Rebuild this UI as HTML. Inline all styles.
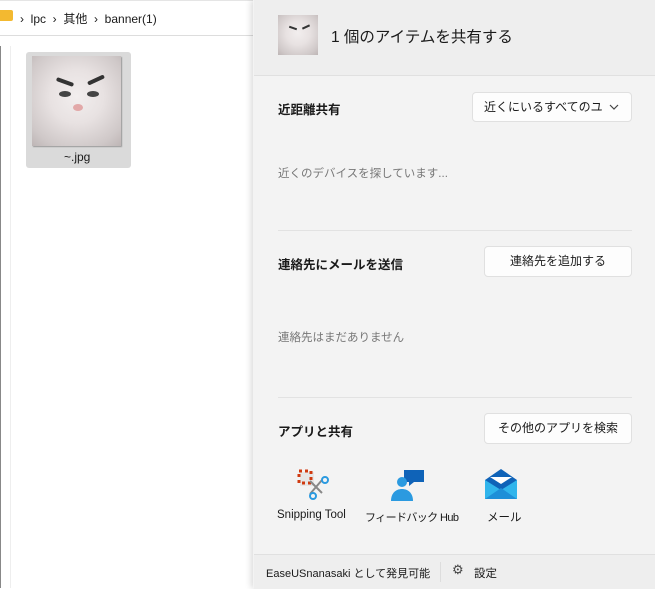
<!DOCTYPE html><html><head><meta charset="utf-8"><style>
body{margin:0;width:655px;height:588px;overflow:hidden;background:#fff;font-family:"Liberation Sans","Noto Sans CJK JP",sans-serif;position:relative}
.a{position:absolute}
.btn{position:absolute;background:#fdfdfd;border:1px solid #e0e0e0;border-radius:4px;font-size:12px;color:#1a1a1a;box-sizing:border-box;text-align:center}
.h{position:absolute;font-size:12.5px;font-weight:bold;color:#1a1a1a}
.g{position:absolute;font-size:11.5px;color:#777}
.cat{position:absolute;background:radial-gradient(circle at 50% 45%,#f2eeee 0,#e8e2e2 40%,#cfc8c8 80%,#bdb5b5 100%);overflow:hidden}
</style></head><body>
<div class="a" style="left:0;top:0;width:254px;height:34px;border-bottom:1px solid #ddd;border-top:1px solid #e5e5e5"></div>
<div class="a" style="left:0;top:10px;width:13px;height:11px;background:#f3b930;border-radius:0 2px 2px 0"></div>
<div class="a" style="left:20px;top:10px;font-size:12px;color:#1a1a1a;white-space:pre">›  lpc  ›  其他  ›  banner(1)</div>
<div class="a" style="left:0;top:46px;width:1px;height:542px;background:#888"></div>
<div class="a" style="left:10px;top:46px;width:1px;height:542px;background:#eee"></div>
<div class="a" style="left:26px;top:52px;width:105px;height:116px;background:#dadada;border-radius:3px"></div>
<div class="cat" style="left:32px;top:56px;width:89px;height:90px;box-shadow:1px 1px 1px #999">
<div class="a" style="left:24px;top:24px;width:18px;height:4px;background:#333;transform:rotate(20deg);border-radius:2px"></div>
<div class="a" style="left:55px;top:22px;width:18px;height:4px;background:#333;transform:rotate(-25deg);border-radius:2px"></div>
<div class="a" style="left:27px;top:35px;width:12px;height:6px;background:#444;border-radius:50%"></div>
<div class="a" style="left:55px;top:35px;width:12px;height:6px;background:#444;border-radius:50%"></div>
<div class="a" style="left:41px;top:48px;width:10px;height:7px;background:#e2a8a8;border-radius:50%"></div>
</div>
<div class="a" style="left:64px;top:150px;font-size:12px;color:#1a1a1a">~.jpg</div>

<div class="a" style="left:253px;top:0;width:402px;height:588px;background:#f3f3f3;box-shadow:-2px 0 6px rgba(0,0,0,.15)"></div>
<div class="a" style="left:254px;top:0;width:401px;height:75px;background:#eeeeee;border-bottom:1px solid #e0e0e0"></div>
<div class="cat" style="left:278px;top:15px;width:40px;height:40px">
<div class="a" style="left:11px;top:12px;width:8px;height:2px;background:#333;transform:rotate(20deg)"></div>
<div class="a" style="left:24px;top:11px;width:8px;height:2px;background:#333;transform:rotate(-25deg)"></div>
</div>
<div class="a" style="left:331px;top:25px;font-size:15.5px;color:#1a1a1a">1 個のアイテムを共有する</div>

<div class="h" style="left:278px;top:99px">近距離共有</div>
<div class="btn" style="left:472px;top:92px;width:160px;height:30px;line-height:28px;text-align:left;padding-left:11px">近くにいるすべてのユ<svg style="position:absolute;right:12px;top:11px" width="10" height="6" viewBox="0 0 10 6"><path d="M1 1l4 4 4-4" stroke="#444" fill="none" stroke-width="1.2"/></svg></div>
<div class="g" style="left:278px;top:165px">近くのデバイスを探しています...</div>
<div class="a" style="left:278px;top:230px;width:354px;height:1px;background:#e2e2e2"></div>
<div class="h" style="left:278px;top:254px">連絡先にメールを送信</div>
<div class="btn" style="left:484px;top:246px;width:148px;height:31px;line-height:29px">連絡先を追加する</div>
<div class="g" style="left:278px;top:329px">連絡先はまだありません</div>
<div class="a" style="left:278px;top:397px;width:354px;height:1px;background:#e2e2e2"></div>
<div class="h" style="left:278px;top:421px">アプリと共有</div>
<div class="btn" style="left:484px;top:413px;width:148px;height:31px;line-height:29px">その他のアプリを検索</div>

<svg class="a" style="left:296px;top:468px" width="36" height="34" viewBox="0 0 36 34">
<rect x="4" y="4" width="14" height="14" fill="#e6e6e6"/>
<path d="M3 3h12v12H3z" stroke="#d03a10" stroke-width="3" fill="none" stroke-dasharray="3 3"/>
<path d="M14 13l12 12M26 12l-12 14" stroke="#888" stroke-width="2"/>
<circle cx="29" cy="12" r="3" fill="none" stroke="#2b9ae0" stroke-width="2"/>
<circle cx="17" cy="28" r="3" fill="none" stroke="#2b9ae0" stroke-width="2"/>
</svg>
<svg class="a" style="left:390px;top:468px" width="36" height="34" viewBox="0 0 36 34">
<path d="M14 2h20v12h-10l-5 4v-4h-5z" fill="#0f63b8"/>
<circle cx="12" cy="14" r="5" fill="#2b9ae0"/>
<path d="M1 33c0-8 5-12 11-12s11 4 11 12z" fill="#2b9ae0"/>
</svg>
<svg class="a" style="left:484px;top:468px" width="34" height="32" viewBox="0 0 34 32">
<path d="M1 12L17 1l16 11v19H1z" fill="#0f63b8"/>
<path d="M1 12l16 10 16-10v19H1z" fill="#30b5ec"/>
<path d="M1 31l16-11 16 11z" fill="#1e8fd8"/>
<path d="M6 9h22l-11 7z" fill="#fff"/>
</svg>
<div class="a" style="left:277px;top:509px;font-size:11.5px;color:#1a1a1a">Snipping Tool</div>
<div class="a" style="left:365px;top:509px;font-size:11px;color:#1a1a1a;letter-spacing:-0.6px">フィードバック Hub</div>
<div class="a" style="left:487px;top:509px;font-size:11.5px;color:#1a1a1a">メール</div>

<div class="a" style="left:254px;top:554px;width:401px;height:34px;background:#eeeeee;border-top:1px solid #e0e0e0"></div>
<div class="a" style="left:266px;top:565px;font-size:11px;color:#1a1a1a">EaseUSnanasaki として発見可能</div>
<div class="a" style="left:440px;top:562px;width:1px;height:20px;background:#ddd"></div>
<div class="a" style="left:452px;top:562px;font-size:13px;color:#444">⚙</div>
<div class="a" style="left:474px;top:565px;font-size:11.5px;color:#1a1a1a">設定</div>
</body></html>
